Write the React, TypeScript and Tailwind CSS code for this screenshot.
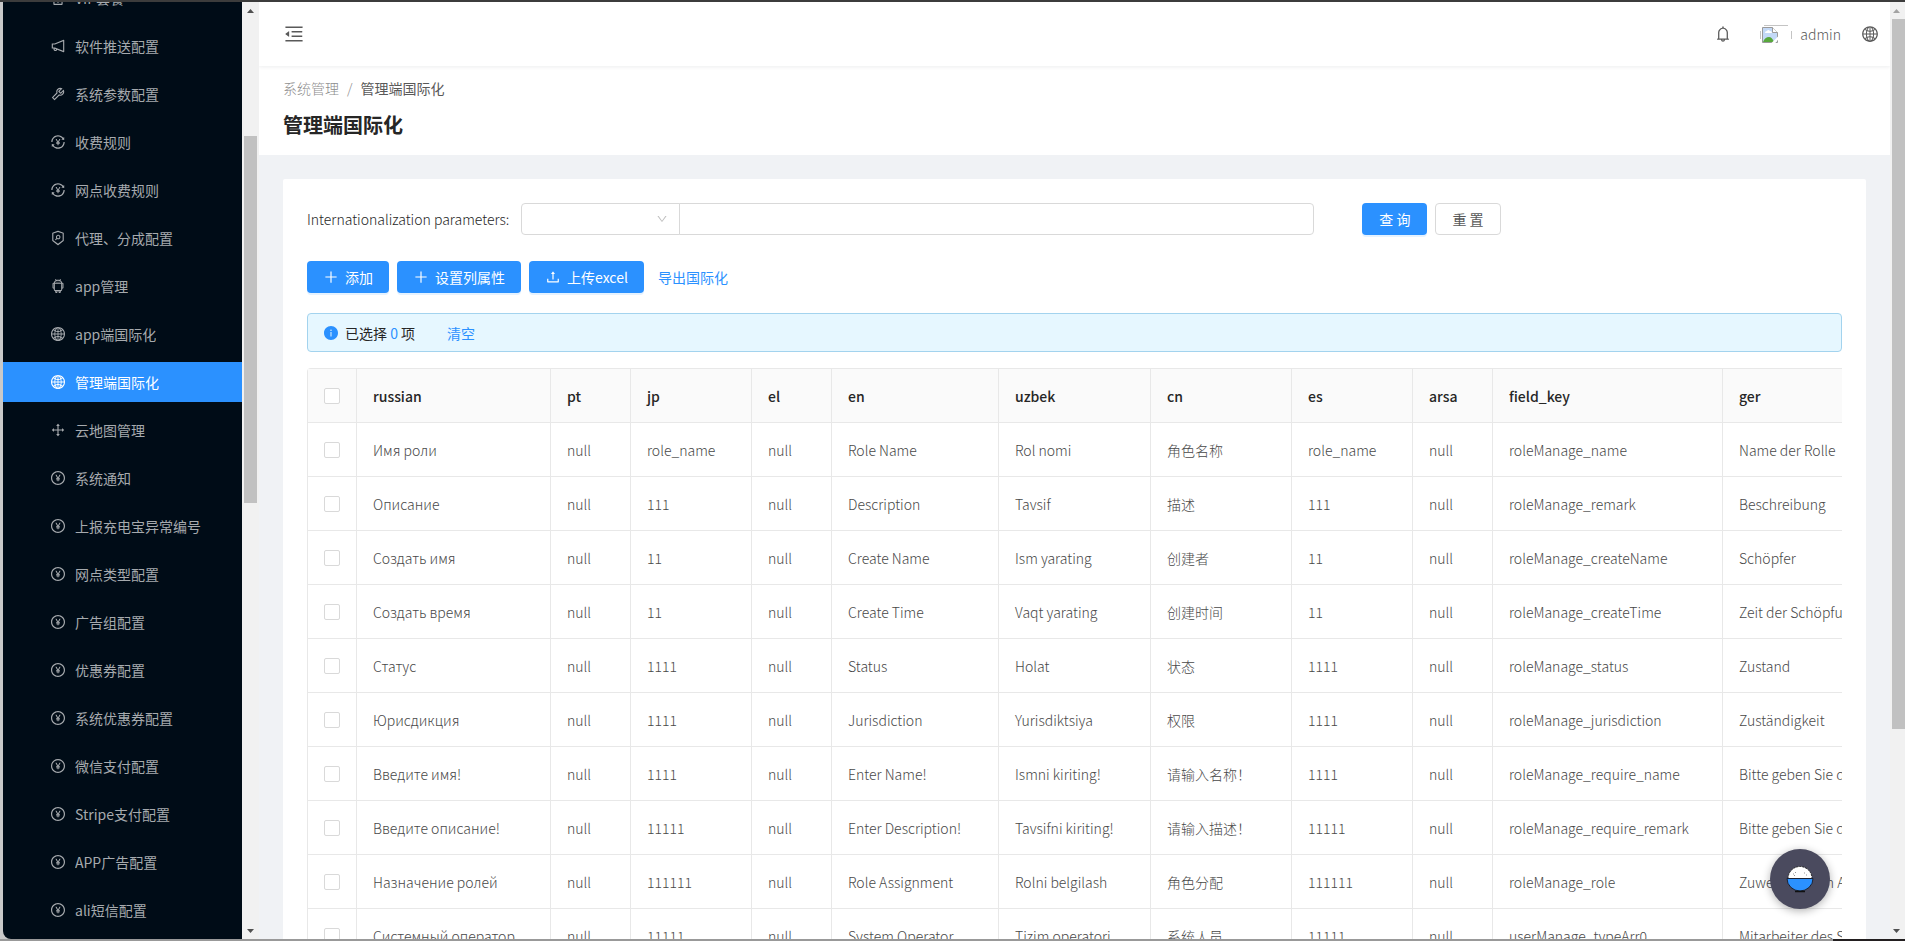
import React from 'react';
import {
  AiFillInfoCircle,
  AiOutlineAndroid,
  AiOutlineBell,
  AiOutlineDown,
  AiOutlineDrag,
  AiOutlineGlobal,
  AiOutlineMenuFold,
  AiOutlineMobile,
  AiOutlineNotification,
  AiOutlinePayCircle,
  AiOutlinePlus,
  AiOutlineSecurityScan,
  AiOutlineTool,
  AiOutlineTransaction,
  AiOutlineUpload,
} from 'react-icons/ai';
import type { IconType } from 'react-icons';

type MenuItem = { label: string; icon: IconType; active?: boolean };

const menu: MenuItem[] = [
  { label: 'VIP套餐', icon: AiOutlineMobile },
  { label: '软件推送配置', icon: AiOutlineNotification },
  { label: '系统参数配置', icon: AiOutlineTool },
  { label: '收费规则', icon: AiOutlineTransaction },
  { label: '网点收费规则', icon: AiOutlineTransaction },
  { label: '代理、分成配置', icon: AiOutlineSecurityScan },
  { label: 'app管理', icon: AiOutlineAndroid },
  { label: 'app端国际化', icon: AiOutlineGlobal },
  { label: '管理端国际化', icon: AiOutlineGlobal, active: true },
  { label: '云地图管理', icon: AiOutlineDrag },
  { label: '系统通知', icon: AiOutlinePayCircle },
  { label: '上报充电宝异常编号', icon: AiOutlinePayCircle },
  { label: '网点类型配置', icon: AiOutlinePayCircle },
  { label: '广告组配置', icon: AiOutlinePayCircle },
  { label: '优惠券配置', icon: AiOutlinePayCircle },
  { label: '系统优惠券配置', icon: AiOutlinePayCircle },
  { label: '微信支付配置', icon: AiOutlinePayCircle },
  { label: 'Stripe支付配置', icon: AiOutlinePayCircle },
  { label: 'APP广告配置', icon: AiOutlinePayCircle },
  { label: 'ali短信配置', icon: AiOutlinePayCircle },
];

const columns = [
  { key: 'russian', width: 'w-[194px]' },
  { key: 'pt', width: 'w-20' },
  { key: 'jp', width: 'w-[121px]' },
  { key: 'el', width: 'w-20' },
  { key: 'en', width: 'w-[167px]' },
  { key: 'uzbek', width: 'w-[152px]' },
  { key: 'cn', width: 'w-[141px]' },
  { key: 'es', width: 'w-[121px]' },
  { key: 'arsa', width: 'w-20' },
  { key: 'field_key', width: 'w-[230px]' },
  { key: 'ger', width: 'w-[260px]' },
];

const rows: string[][] = [
  ['Имя роли', 'null', 'role_name', 'null', 'Role Name', 'Rol nomi', '角色名称', 'role_name', 'null', 'roleManage_name', 'Name der Rolle'],
  ['Описание', 'null', '111', 'null', 'Description', 'Tavsif', '描述', '111', 'null', 'roleManage_remark', 'Beschreibung'],
  ['Создать имя', 'null', '11', 'null', 'Create Name', 'Ism yarating', '创建者', '11', 'null', 'roleManage_createName', 'Schöpfer'],
  ['Создать время', 'null', '11', 'null', 'Create Time', 'Vaqt yarating', '创建时间', '11', 'null', 'roleManage_createTime', 'Zeit der Schöpfung'],
  ['Статус', 'null', '1111', 'null', 'Status', 'Holat', '状态', '1111', 'null', 'roleManage_status', 'Zustand'],
  ['Юрисдикция', 'null', '1111', 'null', 'Jurisdiction', 'Yurisdiktsiya', '权限', '1111', 'null', 'roleManage_jurisdiction', 'Zuständigkeit'],
  ['Введите имя!', 'null', '1111', 'null', 'Enter Name!', 'Ismni kiriting!', '请输入名称！', '1111', 'null', 'roleManage_require_name', 'Bitte geben Sie den Namen ein!'],
  ['Введите описание!', 'null', '11111', 'null', 'Enter Description!', 'Tavsifni kiriting!', '请输入描述！', '11111', 'null', 'roleManage_require_remark', 'Bitte geben Sie die Beschreibung ein!'],
  ['Назначение ролей', 'null', '111111', 'null', 'Role Assignment', 'Rolni belgilash', '角色分配', '111111', 'null', 'roleManage_role', 'Zuweisung von Aufgaben'],
  ['Системный оператор', 'null', '11111', 'null', 'System Operator', 'Tizim operatori', '系统人员', '11111', 'null', 'userManage_typeArr0', 'Mitarbeiter des Systems'],
];

const primaryButton =
  'flex h-8 items-center justify-center gap-1.5 rounded bg-[#2b91ff] px-4 text-white shadow-[0_2px_0_rgba(43,145,255,0.12)]';

function Sidebar() {
  return (
    <nav className="h-full min-w-0 flex-1 overflow-hidden rounded-bl-lg bg-[#000c17]">
      <ul className="-mt-6 flex flex-col gap-2">
        {menu.map(({ label, icon: Icon, active }) => (
          <li key={label}>
            <a
              href="#"
              className={
                active
                  ? 'flex h-10 items-center gap-[9px] bg-[#2b91ff] pl-[47px] text-white'
                  : 'flex h-10 items-center gap-[9px] pl-[47px] text-[#a6aaae]'
              }
            >
              <Icon className="size-4 shrink-0" />
              <span className="truncate">{label}</span>
            </a>
          </li>
        ))}
      </ul>
    </nav>
  );
}

function Arrow({ up, light }: { up?: boolean; light?: boolean }) {
  return (
    <svg viewBox="0 0 17 17" className="size-[17px] shrink-0" aria-hidden="true">
      <path d={up ? 'M5 11h7L8.500 7z' : 'M5 7h7L8.500 11z'} fill={light ? '#a3a3a3' : '#505050'} />
    </svg>
  );
}

function BrokenImage() {
  return (
    <svg viewBox="0 0 32 19" className="h-[19px] w-8" aria-hidden="true">
      <path d="M4 .5h24M.5 6v8M31.500 6v8" stroke="#c4c4c4" fill="none" />
      <path d="M2.500 2.500h10l5 5v10h-15z" fill="#c3d9f7" stroke="#9a9a9a" />
      <path d="M5 8q0-2 2-2 1-2 3 0 2 0 2 2z" fill="#fff" />
      <path d="M3 17q2-5 6-5 3 0 5 5z" fill="#58a83c" />
      <path d="M12.500 2.500v5h5" fill="#fff" stroke="#9a9a9a" />
      <path d="M11 18.500l8-8v3l-4 5z" fill="#fff" />
    </svg>
  );
}

function Bowl() {
  return (
    <svg viewBox="0 0 28 28" className="size-7" aria-hidden="true">
      <path d="M2 13.500a12 12 0 0 1 24 0z" fill="#fff" stroke="#222" strokeDasharray="2 1" />
      <path d="M1 13.500h26a13 12.500 0 0 1-26 0z" fill="#2b91ff" stroke="#1b2233" />
      <path d="M9 26.500h10" stroke="#111" strokeWidth="1.500" />
      <path d="M7 9h1M9 7.500h1M8 10.500h1M18 8h1M20 10h1" stroke="#999" />
    </svg>
  );
}

function Checkbox({ label }: { label: string }) {
  return (
    <input
      type="checkbox"
      aria-label={label}
      className="block size-4 appearance-none rounded-xs border border-[#d9d9d9] bg-white"
    />
  );
}

function SearchForm() {
  return (
    <form className="grid grid-cols-3 gap-12">
      <div className="col-span-2 flex items-center">
        <label htmlFor="param-value" className="w-[214px] shrink-0 font-light text-[#262626]">
          Internationalization parameters:
        </label>
        <div className="relative w-[159px] shrink-0">
          <select
            aria-label="Parameter"
            className="block h-8 w-full appearance-none rounded-l border border-[#d9d9d9] bg-white"
          />
          <AiOutlineDown className="pointer-events-none absolute top-2.5 right-3 size-3 text-[#bfbfbf]" />
        </div>
        <input
          id="param-value"
          type="text"
          className="-ml-px h-8 min-w-0 flex-1 rounded-r border border-[#d9d9d9] bg-white px-3"
        />
      </div>
      <div className="flex gap-2">
        <button type="button" className="h-8 rounded bg-[#2b91ff] px-[17px] text-white shadow-[0_2px_0_rgba(43,145,255,0.12)]">
          查 询
        </button>
        <button type="button" className="h-8 rounded border border-[#d9d9d9] bg-white px-4 text-[#595959]">
          重 置
        </button>
      </div>
    </form>
  );
}

function DataTable() {
  return (
    <div className="mt-4 overflow-hidden rounded-tl">
      <table className="w-[1676px] table-fixed border-separate border-spacing-0 border-t border-l border-[#e8e8e8] text-left">
        <colgroup>
          <col className="w-[49px]" />
          {columns.map((c) => (
            <col key={c.key} className={c.width} />
          ))}
        </colgroup>
        <thead>
          <tr className="h-[54px] bg-[#fafafa]">
            <th className="border-r border-b border-[#e8e8e8] px-4">
              <Checkbox label="Select all" />
            </th>
            {columns.map((c) => (
              <th key={c.key} className="border-r border-b border-[#e8e8e8] px-4 font-medium text-[#262626]">
                {c.key}
              </th>
            ))}
          </tr>
        </thead>
        <tbody>
          {rows.map((row) => (
            <tr key={row[0]} className="h-[54px] font-light text-[#484848]">
              <td className="border-r border-b border-[#e8e8e8] px-4">
                <Checkbox label={row[0]} />
              </td>
              {row.map((cell, i) => (
                <td key={columns[i].key} className="border-r border-b border-[#e8e8e8] px-4 whitespace-nowrap">
                  {cell}
                </td>
              ))}
            </tr>
          ))}
        </tbody>
      </table>
    </div>
  );
}

export default function App() {
  return (
    <div className="flex h-screen flex-col overflow-hidden border-t-2 border-t-[#3c3c3c] bg-[#c9c9c9] font-['Noto_Sans_CJK_SC',sans-serif] text-sm text-[#595959]">
      <div className="flex min-h-0 flex-1 pl-[3px]">
        <aside className="flex w-64 shrink-0">
          <Sidebar />
          <div className="flex h-full w-[17px] shrink-0 flex-col items-center bg-[#f1f1f1]" aria-hidden="true">
            <Arrow up />
            <div className="h-[117px]" />
            <div className="h-[367px] w-[13px] bg-[#c1c1c1]" />
            <div className="flex-1" />
            <Arrow />
          </div>
        </aside>
        <main className="flex min-w-0 flex-1 flex-col overflow-hidden bg-[#f0f2f5]">
          <header className="relative flex h-16 shrink-0 items-center justify-between bg-white pr-[11px] pl-6 shadow-[0_1px_4px_rgba(0,21,41,0.08)]">
            <button type="button" aria-label="Collapse menu">
              <AiOutlineMenuFold className="size-[22px]" />
            </button>
            <div className="flex items-center">
              <button type="button" aria-label="Notifications" className="mr-7">
                <AiOutlineBell className="size-[18px]" />
              </button>
              <a href="#" className="mr-5 flex items-center gap-2 font-light">
                <BrokenImage />
                <span>admin</span>
              </a>
              <button type="button" aria-label="Language">
                <AiOutlineGlobal className="size-[18px]" />
              </button>
            </div>
          </header>
          <section className="h-[89px] shrink-0 bg-white px-6 pt-[11px]">
            <div className="flex gap-2 leading-[22px] text-[#8c8c8c]">
              <a href="#" className="font-light">系统管理</a>
              <span className="font-light">/</span>
              <span className="text-[#595959]">管理端国际化</span>
            </div>
            <h1 className="mt-2.5 text-xl leading-8 font-bold text-[#262626]">管理端国际化</h1>
          </section>
          <section className="mx-6 mt-6 flex-1 rounded-t-xs bg-white p-6">
            <SearchForm />
            <div className="mt-[26px] flex gap-2">
              <button type="button" className={primaryButton}>
                <AiOutlinePlus className="size-4" />添加
              </button>
              <button type="button" className={primaryButton}>
                <AiOutlinePlus className="size-4" />设置列属性
              </button>
              <button type="button" className={primaryButton}>
                <AiOutlineUpload className="size-4" />上传excel
              </button>
              <a href="#" className="flex items-center px-1.5 text-[#2b91ff]">导出国际化</a>
            </div>
            <div className="mt-5 flex h-[39px] items-center rounded border border-[#a3d3ee] bg-[#e6f7ff] px-[15px] text-[#262626]">
              <AiFillInfoCircle className="mr-1.5 size-4 text-[#2b91ff]" />
              <span>
                已选择 <span className="text-[#2b91ff]">0</span> 项
              </span>
              <a href="#" className="ml-8 text-[#2b91ff]">清空</a>
            </div>
            <DataTable />
          </section>
        </main>
        <div className="flex h-full w-[15px] shrink-0 flex-col items-end overflow-hidden bg-[#f1f1f1]" aria-hidden="true">
          <Arrow up light />
          <div className="h-[710px] w-[13px] bg-[#c1c1c1]" />
          <div className="flex-1" />
          <Arrow />
        </div>
      </div>
      <div className="flex h-0.5 shrink-0">
        <div className="flex-1 bg-[#999999]" />
        <div className="w-[72px] bg-[#231f20]" />
      </div>
      <button
        type="button"
        aria-label="Assistant"
        className="fixed right-[75px] bottom-8 flex size-[60px] items-center justify-center rounded-full bg-[#4a4a5e] shadow-[0_2px_8px_rgba(0,0,0,0.3)]"
      >
        <Bowl />
      </button>
    </div>
  );
}
